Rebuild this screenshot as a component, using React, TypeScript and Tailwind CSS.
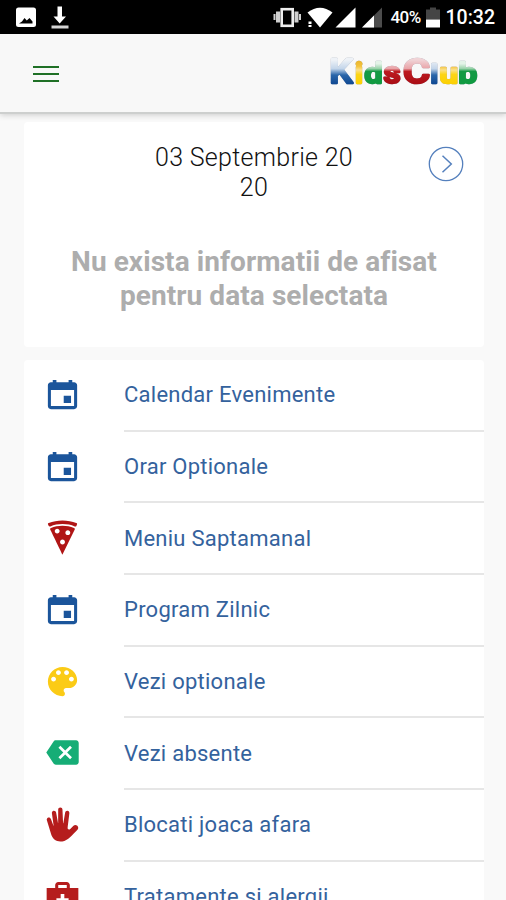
import type { ReactNode } from "react";
import { IoMdBackspace, IoMdCalendar, IoMdColorPalette, IoMdHand, IoMdMedkit, IoMdPizza } from "react-icons/io";

type MenuEntry = {
  label: string;
  icon: ReactNode;
};

const MENU: MenuEntry[] = [
  { label: "Calendar Evenimente", icon: <IoMdCalendar size={39} color="#1b559b" /> },
  { label: "Orar Optionale", icon: <IoMdCalendar size={39} color="#1b559b" /> },
  { label: "Meniu Saptamanal", icon: <IoMdPizza size={39} color="#b01515" /> },
  { label: "Program Zilnic", icon: <IoMdCalendar size={39} color="#1b559b" /> },
  { label: "Vezi optionale", icon: <IoMdColorPalette size={39} color="#fbcb16" /> },
  { label: "Vezi absente", icon: <IoMdBackspace size={39} color="#16ad76" /> },
  { label: "Blocati joaca afara", icon: <IoMdHand size={39} color="#b51d1d" /> },
  { label: "Tratamente si alergii", icon: <IoMdMedkit size={39} color="#b51d1d" /> },
];

// Each letter of the wordmark: glyph, left edge, font size, fill
const LOGO = [
  { ch: "K", x: 0.5, size: 34, width: 23, fill: "url(#blue)" },
  { ch: "i", x: 26, size: 29, width: 8, fill: "url(#yellow)" },
  { ch: "d", x: 35.5, size: 27, width: 18, fill: "url(#green)" },
  { ch: "s", x: 54.5, size: 29, width: 17, fill: "url(#red)" },
  { ch: "C", x: 74, size: 34, width: 27, fill: "url(#red)" },
  { ch: "l", x: 101.5, size: 26, width: 7.5, fill: "url(#blue)" },
  { ch: "u", x: 110.5, size: 28, width: 18.5, fill: "url(#yellow)" },
  { ch: "b", x: 129.5, size: 27, width: 18.5, fill: "url(#green)" },
];

function Logo() {
  return (
    <svg width="151" height="50" viewBox="0 -8 151 50" className="overflow-visible">
      <defs>
        <linearGradient id="blue" gradientUnits="userSpaceOnUse" x1="0" y1="4" x2="0" y2="29">
          <stop offset="0" stopColor="#eef2f7" />
          <stop offset="0.35" stopColor="#c3d5ea" />
          <stop offset="0.6" stopColor="#2a66aa" />
          <stop offset="1" stopColor="#0c458f" />
        </linearGradient>
        <linearGradient id="red" gradientUnits="userSpaceOnUse" x1="0" y1="4" x2="0" y2="29">
          <stop offset="0" stopColor="#f0d3d6" />
          <stop offset="0.34" stopColor="#e9a4a8" />
          <stop offset="0.46" stopColor="#bd1a20" />
          <stop offset="1" stopColor="#a80c14" />
        </linearGradient>
        <linearGradient id="green" gradientUnits="userSpaceOnUse" x1="0" y1="4" x2="0" y2="29">
          <stop offset="0.15" stopColor="#e4f3e8" />
          <stop offset="0.34" stopColor="#9bd3ab" />
          <stop offset="0.46" stopColor="#159a45" />
          <stop offset="1" stopColor="#0f9a40" />
        </linearGradient>
        <linearGradient id="yellow" gradientUnits="userSpaceOnUse" x1="0" y1="4" x2="0" y2="29">
          <stop offset="0" stopColor="#e9b32c" />
          <stop offset="0.25" stopColor="#f4c33c" />
          <stop offset="0.4" stopColor="#fbe08a" />
          <stop offset="0.58" stopColor="#fdd516" />
          <stop offset="1" stopColor="#fcd000" />
        </linearGradient>
      </defs>
      <g fontFamily="Roboto, sans-serif" fontWeight="500" strokeLinejoin="round" strokeLinecap="round">
        {LOGO.map((l) => (
          <text
            key={l.x}
            x={l.x}
            y="27.3"
            fontSize={l.size}
            textLength={l.width}
            lengthAdjust="spacingAndGlyphs"
            fill={l.fill}
            stroke={l.fill}
            strokeWidth="2.5"
            className="drop-shadow-[0_0_0.7px_rgba(70,80,110,0.5)]"
          >
            {l.ch}
          </text>
        ))}
      </g>
    </svg>
  );
}

function StatusBar() {
  return (
    <div className="flex h-[34px] shrink-0 items-center bg-black pl-4 pr-[11px] text-white">
      <svg width="54" height="34" viewBox="0 0 54 34">
        <path
          fillRule="evenodd"
          fill="#fff"
          d="M2.500 7.500h15q2.500 0 2.500 2.500v14.500q0 2.500-2.500 2.500h-15q-2.500 0-2.500-2.500v-14.500q0-2.500 2.500-2.500zM3 23.500h13.500v-2l-3-3.500-2.700 2.500-2.300-2.500-2.500 3.500z"
        />
        <path fill="#fff" d="M41.500 6.500h4.500v10h4l-6.300 7-6.200-7h4z" />
        <path fill="#d5d5d5" d="M35.500 25.500h17v3h-17z" />
      </svg>
      <svg className="ml-auto" width="118" height="34" viewBox="0 0 118 34">
        <path fill="#d0d0d0" d="M.5 14h2v6h-2zM3 11.500h4v11h-4zM21.500 11.500h4v11h-4zM26 14h2v6h-2z" />
        <rect x="8.700" y="9.200" width="11" height="16.600" fill="none" stroke="#eee" strokeWidth="2.600" />
        <path fill="#fff" d="M34.500 12.500q12.500-9.500 25 0l-12.500 15z" />
        <path fill="#fff" d="M35.500 21.500h3v2.500h-3zM35.500 25h3v2h-3z" />
        <path fill="#fff" d="M62.500 27.500l20-20v20z" />
        <path fill="#4c4c4c" d="M89 27.500l20-20v20z" />
        <path fill="#fff" d="M89 27.500l12-12v12z" />
      </svg>
      <span className="mt-[2px] w-[33px] font-['Roboto'] text-[17px] font-medium tracking-[-0.6px]">40%</span>
      <svg width="18" height="34" viewBox="0 0 18 34">
        <path fill="#454545" d="M6 7.500h6v2h4v10h-14v-10h4z" />
        <path fill="#fff" d="M2 19.500h14v8h-14z" />
      </svg>
      <span className="ml-[4px] mt-[2px] font-['Roboto'] text-[19.500px] font-medium">10:32</span>
    </div>
  );
}

function DayCard() {
  return (
    <section className="relative h-[225px] rounded bg-white pt-[21px] text-center">
      <h1 className="text-[25px] font-light leading-[29.500px] tracking-[0.3px] text-[#111]">
        03 Septembrie 20
        <br />
        20
      </h1>
      <button className="absolute right-[20px] top-[24px]" aria-label="Ziua urmatoare">
        <svg width="36" height="36" viewBox="0 0 36 36" fill="none" stroke="#5580bd">
          <circle cx="18" cy="18" r="16.700" strokeWidth="1.300" />
          <path d="M14.500 9.700l8.800 8.300-8.800 8.300" strokeWidth="1.500" />
        </svg>
      </button>
      <p className="mt-[43px] text-[28px] font-bold leading-[34px] tracking-[0.07px] text-[#adadad]">
        Nu exista informatii de afisat
        <br />
        pentru data selectata
      </p>
    </section>
  );
}

export default function App() {
  return (
    <div className="flex h-[900px] w-[506px] flex-col overflow-hidden bg-[#f9f9f9] font-['Roboto',sans-serif]">
      <StatusBar />
      <header className="flex h-[80px] shrink-0 items-center justify-between border-b-2 border-[#cdcfce] bg-[#f8f8f8] pl-[33px] pr-[26px] shadow-[0_1px_6px_rgba(0,0,0,0.18)]">
        <button aria-label="Meniu" className="mt-px flex w-[26px] flex-col gap-[5px]">
          <span className="h-[2px] bg-[#1f7026]" />
          <span className="h-[2px] bg-[#1f7026]" />
          <span className="h-[2px] bg-[#1f7026]" />
        </button>
        <Logo />
      </header>

      <main className="flex flex-col gap-[13px] pl-[24px] pr-[22px] pt-[8px]">
        <DayCard />
        <nav className="rounded-t bg-white">
          {MENU.map((item) => (
            <a key={item.label} className="flex h-[71.700px] items-stretch">
              <span className="flex w-[77px] shrink-0 items-center justify-center pb-[3px]">{item.icon}</span>
              <span className="ml-[23px] flex flex-1 items-center border-b-2 border-[#e6e6e6] text-[22px] tracking-[0.250px] text-[#34629d]">
                {item.label}
              </span>
            </a>
          ))}
        </nav>
      </main>
    </div>
  );
}
